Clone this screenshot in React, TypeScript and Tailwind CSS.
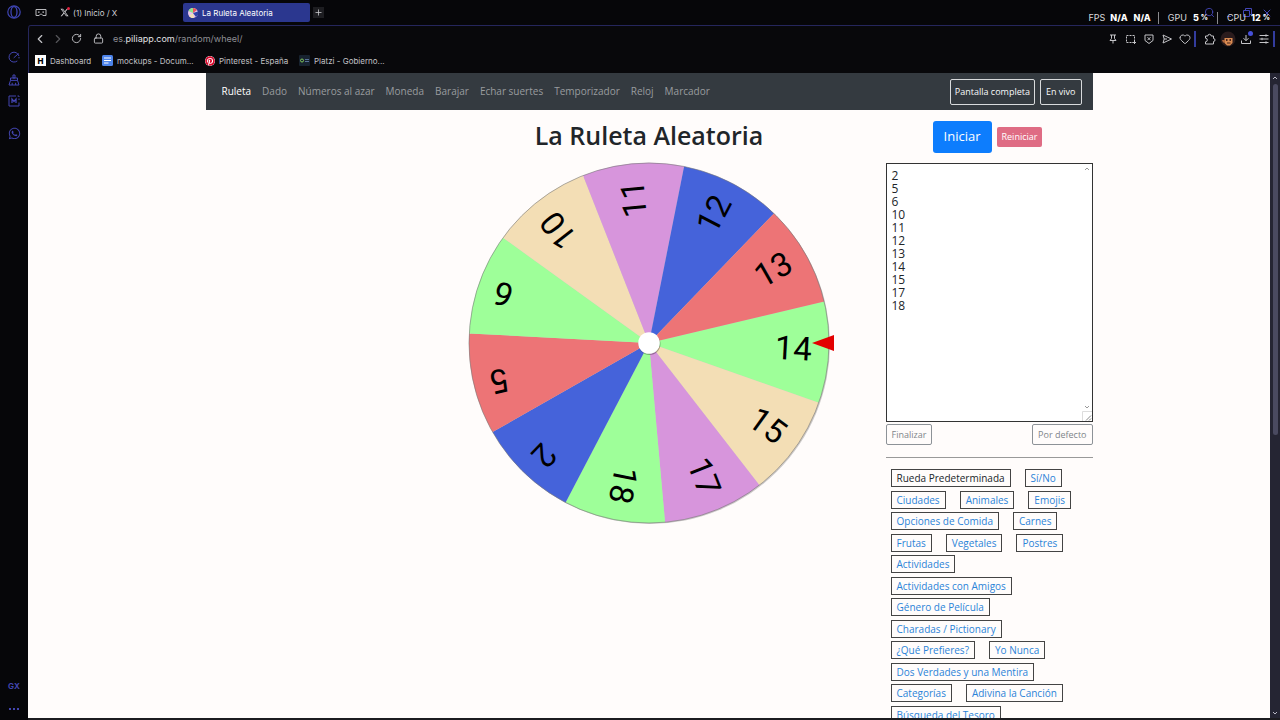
import type { ReactNode } from "react";
import {
  ChevronLeft,
  ChevronRight,
  Heart,
  Lock,
  Minus,
  Plus,
  RotateCw,
  Search,
  X,
} from "lucide-react";
import { FaPinterest, FaWhatsapp, FaXTwitter } from "react-icons/fa6";

const GREEN = "#9eff99";
const TAN = "#f3deb5";
const PURPLE = "#d795dc";
const BLUE = "#4563da";
const RED = "#ed7476";

const slices = [
  { label: "14", color: GREEN },
  { label: "15", color: TAN },
  { label: "17", color: PURPLE },
  { label: "18", color: GREEN },
  { label: "2", color: BLUE },
  { label: "5", color: RED },
  { label: "6", color: GREEN },
  { label: "10", color: TAN },
  { label: "11", color: PURPLE },
  { label: "12", color: BLUE },
  { label: "13", color: RED },
];

const navItems = [
  "Ruleta",
  "Dado",
  "Números al azar",
  "Moneda",
  "Barajar",
  "Echar suertes",
  "Temporizador",
  "Reloj",
  "Marcador",
];

const presets = [
  "Rueda Predeterminada",
  "Sí/No",
  "Ciudades",
  "Animales",
  "Emojis",
  "Opciones de Comida",
  "Carnes",
  "Frutas",
  "Vegetales",
  "Postres",
  "Actividades",
  "Actividades con Amigos",
  "Género de Película",
  "Charadas / Pictionary",
  "¿Qué Prefieres?",
  "Yo Nunca",
  "Dos Verdades y una Mentira",
  "Categorías",
  "Adivina la Canción",
  "Búsqueda del Tesoro",
];

const entries = ["2", "5", "6", "10", "11", "12", "13", "14", "15", "17", "18"];

const RADIUS = 180;
const START_ANGLE = -13.3;

function point(angle: number) {
  const rad = (angle * Math.PI) / 180;
  return `${RADIUS * Math.cos(rad)} ${RADIUS * Math.sin(rad)}`;
}

function Wheel() {
  const step = 360 / slices.length;
  return (
    <svg
      viewBox="-181 -181 362 362"
      className="w-[362px] max-w-full overflow-visible"
      role="img"
      aria-label="Ruleta"
    >
      <circle cx="1" cy="1" r={RADIUS} fill="#000" opacity="0.2" />
      {slices.map((slice, i) => {
        const from = START_ANGLE + i * step;
        return (
          <g key={slice.label}>
            <path
              d={`M0 0 L${point(from)} A${RADIUS} ${RADIUS} 0 0 1 ${point(from + step)} Z`}
              fill={slice.color}
            />
            <text
              x="163"
              y="9"
              textAnchor="end"
              transform={`rotate(${from + step / 2})`}
              className="font-['Roboto','Liberation_Sans',sans-serif] text-[33px]"
            >
              {slice.label}
            </text>
          </g>
        );
      })}
      <circle r={RADIUS} fill="none" stroke="#777" strokeWidth="0.6" />
      <circle cx="0.5" cy="1" r="11" fill="#000" opacity="0.3" />
      <circle r="10.8" fill="#fff" />
      <path d="M163 0 L185 -8 V8 Z" fill="#e30000" />
    </svg>
  );
}

function OperaLogo() {
  return (
    <svg viewBox="0 0 14 14" className="size-[14px]" fill="none" stroke="#3f45b5">
      <circle cx="7" cy="7" r="6.2" strokeWidth="1.2" />
      <ellipse cx="7" cy="7" rx="3" ry="5.4" strokeWidth="1.3" />
    </svg>
  );
}

function SpeedDialIcon() {
  return (
    <svg viewBox="0 0 12 12" className="size-3" fill="none" stroke="currentColor" strokeLinecap="round">
      <path d="M9 10.2A5 5 0 1 1 10.8 4.6M6 6.6L10.3 2.8M11 6.4v.6" />
    </svg>
  );
}

function CleanerIcon() {
  return (
    <svg viewBox="0 0 12 12" className="size-3" fill="none" stroke="currentColor" strokeLinejoin="round">
      <path d="M5 1h2v3H5zM2.5 4h7v2.4h-7zM2.5 6.4L1 11h10L9.5 6.4M4.2 11V8.8M7.6 11V8.8" />
    </svg>
  );
}

function ModsIcon() {
  return (
    <svg viewBox="0 0 12 12" className="size-3" fill="none" stroke="currentColor">
      <path d="M8 1H1v10h10V7.5M11 5V3.5M9.5 1H11v1" />
      <path d="M4 8V4l2 2.4L8 4v4" strokeWidth="1.3" />
    </svg>
  );
}

function Sidebar() {
  return (
    <aside className="flex w-7 shrink-0 flex-col items-center justify-between bg-[#060609] pt-[5px] pb-[6px] text-[#4345b0]">
      <div className="flex flex-col items-center">
        <button aria-label="Menú">
          <OperaLogo />
        </button>
        <button aria-label="Speed dial" className="mt-8">
          <SpeedDialIcon />
        </button>
        <button aria-label="Limpieza" className="mt-[11px]">
          <CleanerIcon />
        </button>
        <button aria-label="Mods" className="mt-[9px]">
          <ModsIcon />
        </button>
        <button aria-label="WhatsApp" className="mt-5">
          <FaWhatsapp size={13} />
        </button>
      </div>
      <div className="flex flex-col items-center gap-3">
        <button className="font-['Inter',sans-serif] text-[8px] leading-3 font-bold">GX</button>
        <button aria-label="Más" className="flex h-[10px] items-center gap-[2px]">
          <span className="size-[2px] bg-current" />
          <span className="size-[2px] bg-current" />
          <span className="size-[2px] bg-current" />
        </button>
      </div>
    </aside>
  );
}

function TabBar() {
  return (
    <div className="flex h-[25px] items-center pl-[7px] text-[8px] text-[#d0d0d4]">
      <button aria-label="Espacio de trabajo">
        <svg viewBox="0 0 12 10" className="h-[10px] w-3" fill="none" stroke="#b8b8bc">
          <path d="M1 1.5h10v6H7.8L6.500 6h-1L4.2 7.5H1z" strokeLinejoin="round" />
          <path d="M3 4.2h1.6M7.4 4.2H9" strokeWidth="1.2" />
        </svg>
      </button>
      <a href="#x" className="ml-[13px] flex w-[123px] items-center gap-1">
        <span className="relative">
          <FaXTwitter size={9} />
          <span className="absolute -top-px -right-px size-[3px] rounded-full bg-[#e0213f]" />
        </span>
        (1) Inicio / X
      </a>
      <a
        href="#ruleta"
        className="flex h-[19px] w-[127px] items-center gap-[4px] rounded-[2px] bg-[#2b378f] pl-[5px] text-white"
      >
        <svg viewBox="0 0 10 10" className="size-[10px]">
          <circle cx="5" cy="5" r="5" fill="#e8c6ec" />
          <path d="M5 5V0a5 5 0 0 0-4.5 3z" fill="#8ee58c" />
          <path d="M5 5L1 8a5 5 0 0 0 5 2z" fill="#f3deb5" />
          <path d="M5 5L9 2A5 5 0 0 0 5 0z" fill="#e8585d" />
          <path d="M5 5l5-1.500v3L8 9z" fill="#2e43a8" />
        </svg>
        La Ruleta Aleatoria
      </a>
      <button aria-label="Nueva pestaña" className="ml-[3px] flex size-[11px] items-center justify-center bg-[#1d1d21]">
        <Plus size={9} />
      </button>
      <div className="ml-auto flex items-center gap-[8px] pr-[7px] text-[#4346b8]">
        <button aria-label="Buscar">
          <Search size={11} strokeWidth={2} />
        </button>
        <button aria-label="Minimizar">
          <svg viewBox="0 0 11 11" className="size-[11px]" stroke="currentColor">
            <path d="M4 9.500h4" />
          </svg>
        </button>
        <button aria-label="Restaurar">
          <svg viewBox="0 0 11 11" className="size-[11px]" fill="none" stroke="currentColor">
            <path d="M1.500 3.500h6v6h-6zM3.500 3.500v-2h6v6h-2" />
          </svg>
        </button>
        <button aria-label="Cerrar">
          <X size={12} strokeWidth={2} />
        </button>
      </div>
    </div>
  );
}

function ToolButton({ label, children }: { label: string; children: ReactNode }) {
  return (
    <button aria-label={label} className="relative flex h-[18px] w-[18px] items-center justify-center">
      {children}
    </button>
  );
}

function AddressBar() {
  return (
    <div className="flex h-[25px] items-center text-[#c4c4c8]">
      <div className="flex items-center pl-[2px]">
        <ToolButton label="Atrás">
          <ChevronLeft size={14} />
        </ToolButton>
        <span className="text-[#55555a]">
          <ToolButton label="Adelante">
            <ChevronRight size={14} />
          </ToolButton>
        </span>
        <ToolButton label="Recargar">
          <RotateCw size={11} />
        </ToolButton>
      </div>
      <span className="ml-[8px] flex">
        <Lock size={11} />
      </span>
      <a href="#url" className="ml-[9px] text-[9px] text-[#8f8f95]">
        es.<span className="text-[#e2e2e5]">piliapp.com</span>/random/wheel/
      </a>
      <div className="ml-auto flex items-center pr-[5px]">
        <ToolButton label="Fijar">
          <svg viewBox="0 0 10 10" className="size-[10px]" fill="none" stroke="currentColor">
            <path d="M2 1h6M3.500 1v3.500L2 6.500h6L6.500 4.500V1M5 6.500V9.500" />
          </svg>
        </ToolButton>
        <ToolButton label="Captura">
          <svg viewBox="0 0 10 10" className="size-[10px]" fill="none" stroke="currentColor">
            <path d="M.5 1.500h8v7h-8z" strokeDasharray="2 1" />
            <path d="M8.500 6.500v3.500M6.500 8.500H10" />
          </svg>
        </ToolButton>
        <ToolButton label="Bloqueador">
          <svg viewBox="0 0 10 10" className="size-[10px]" fill="none" stroke="currentColor">
            <path d="M1 1h8v5.500L5 9.500 1 6.500zM3.500 3.200l3 3M6.500 3.200l-3 3" />
          </svg>
        </ToolButton>
        <ToolButton label="Enviar">
          <svg viewBox="0 0 10 10" className="size-[10px]" fill="none" stroke="currentColor" strokeLinejoin="round">
            <path d="M1 1l8.500 4L1 9l1.200-4zM2.200 5H5" />
          </svg>
        </ToolButton>
        <ToolButton label="Favorito">
          <Heart size={12} />
        </ToolButton>
        <span className="mr-[5px] h-4 w-[2px] bg-[#333c9e]" />
        <ToolButton label="Extensiones">
          <svg viewBox="0 0 12 12" className="size-3" fill="none" stroke="currentColor" strokeLinejoin="round">
            <path d="M1.500 3h2.300a1.700 1.700 0 0 1 3.400 0H9.500v2.500a1.500 1.500 0 0 1 0 3V11h-8V8.800a1.800 1.800 0 0 0 0-3.600z" />
          </svg>
        </ToolButton>
        <ToolButton label="Perfil">
          <svg viewBox="0 0 16 16" className="size-4">
            <circle cx="8" cy="8" r="7.500" fill="#2b1c1d" />
            <path d="M4.500 7h8v5l-2.500 2.500H7L4.500 12z" fill="#d98b52" />
            <path d="M2 9h3v2.500H3z" fill="#b3683b" />
            <path d="M6 8h1.500v2H6zM9.500 8H11v2H9.500zM7 11.500h3.500v1H7z" fill="#4a251b" />
          </svg>
        </ToolButton>
        <ToolButton label="Descargas">
          <svg viewBox="0 0 10 10" className="size-[10px]" fill="none" stroke="currentColor">
            <path d="M5 1v5.500M2.500 4.200L5 6.700l2.500-2.500M.5 6.500v3h9v-3" />
          </svg>
          <span className="absolute top-px right-[2px] size-[5px] rounded-full bg-[#4650d8]" />
        </ToolButton>
        <ToolButton label="Ajustes">
          <svg viewBox="0 0 10 10" className="size-[10px]" fill="none" stroke="currentColor">
            <path d="M.5 1.500h9M.5 5h9M.5 8.500h9" />
            <path d="M7 .3v2.400M3 3.800v2.400M7 7.300v2.400" />
          </svg>
        </ToolButton>
        <span className="h-4 w-[2px] bg-[#333c9e]" />
      </div>
    </div>
  );
}

function Bookmarks() {
  return (
    <nav className="mb-[3px] flex h-[19px] items-center pl-[6px] text-[8px] text-[#c2c2c6]">
      <a href="#dashboard" className="flex w-[67px] items-center gap-1">
        <span className="flex size-[11px] items-center justify-center bg-white text-[8px] font-extrabold text-black">
          H
        </span>
        Dashboard
      </a>
      <a href="#mockups" className="flex w-[103px] items-center gap-1">
        <svg viewBox="0 0 11 11" className="size-[11px]">
          <rect width="11" height="11" rx="1.500" fill="#4c83ea" />
          <path d="M2 3h7M2 5.500h7M2 8h4.500" stroke="#fff" />
        </svg>
        mockups - Docum...
      </a>
      <a href="#pinterest" className="flex w-[94px] items-center gap-1">
        <FaPinterest size={10} className="rounded-full bg-white text-[#d8092d]" />
        Pinterest - España
      </a>
      <a href="#platzi" className="flex items-center gap-1">
        <svg viewBox="0 0 11 11" className="size-[11px]">
          <rect width="11" height="11" rx="1" fill="#17222f" />
          <circle cx="3" cy="5.500" r="1.500" fill="none" stroke="#7fc65a" />
          <path d="M6 4.500h4M6 6.500h4" stroke="#58719a" />
        </svg>
        Platzi - Gobierno...
      </a>
    </nav>
  );
}

function StatsOverlay() {
  return (
    <div className="pointer-events-none absolute top-[11px] right-[10px] flex items-center font-['Inter',sans-serif] text-[9px] leading-[14px] text-[#dadadd]">
      <span>FPS</span>
      <b className="ml-[5px] font-extrabold text-white">N/A</b>
      <b className="ml-[6px] font-extrabold text-white">N/A</b>
      <span className="mr-[9px] ml-[7px] h-3 w-px bg-[#8a8a8e]" />
      <span>GPU</span>
      <b className="ml-[6px] font-extrabold text-white">5</b>
      <b className="ml-[2px] text-[7px] font-extrabold text-white">%</b>
      <span className="mx-[9px] h-3 w-px bg-[#8a8a8e]" />
      <span>CPU</span>
      <b className="ml-[5px] font-extrabold text-white">12</b>
      <b className="ml-[2px] text-[7px] font-extrabold text-white">%</b>
    </div>
  );
}

function SiteNav() {
  return (
    <header className="flex h-[37px] items-center bg-[#343a40] pr-[11px] pl-4">
      <nav className="flex gap-[11px] text-[10px]">
        {navItems.map((item, i) => (
          <a key={item} href={`#${i}`} className={i === 0 ? "text-white" : "text-[#999c9f]"}>
            {item}
          </a>
        ))}
      </nav>
      <div className="ml-auto flex gap-[5px] text-[9px] text-[#f8f9fa]">
        <button className="h-[26px] rounded-[2px] border border-[#d8dadc] px-[4px]">Pantalla completa</button>
        <button className="h-[26px] rounded-[2px] border border-[#d8dadc] px-[5px]">En vivo</button>
      </div>
    </header>
  );
}

function Controls() {
  return (
    <section className="w-[207px] shrink-0 pt-[11px]">
      <div className="flex items-center justify-center gap-[5px] pr-[3px] text-white">
        <button className="h-8 rounded-[3px] bg-[#0d7dfd] px-[11px] text-[13px]">Iniciar</button>
        <button className="h-5 rounded-[2px] bg-[#df6c84] px-[5px] text-[9px]">Reiniciar</button>
      </div>

      <div className="relative mt-[10px]">
        <textarea
          aria-label="Opciones de la ruleta"
          defaultValue={entries.join("\n")}
          spellCheck={false}
          className="block h-[259px] w-full resize-none overflow-hidden border border-[#333] bg-white px-[5px] py-[5px] text-[12px] leading-[13px] text-[#212529]"
        />
        <svg viewBox="0 0 6 4" className="absolute top-[4px] right-[3px] w-[6px]" fill="none" stroke="#999">
          <path d="M1 3l2-2 2 2" />
        </svg>
        <svg viewBox="0 0 6 4" className="absolute right-[3px] bottom-[13px] w-[6px]" fill="none" stroke="#999">
          <path d="M1 1l2 2 2-2" />
        </svg>
        <svg viewBox="0 0 10 10" className="absolute right-px bottom-px size-[10px]" fill="none">
          <path d="M.5 10V.5H10" stroke="#ddd" />
          <path d="M4 9.500l5-5M7 9.500l2-2" stroke="#888" />
        </svg>
      </div>

      <div className="mt-[2px] flex justify-between text-[9px] text-[#80858a]">
        <button className="h-[21px] rounded-[2px] border border-[#8d9297] px-[5px]">Finalizar</button>
        <button className="h-[21px] rounded-[2px] border border-[#8d9297] px-[5px]">Por defecto</button>
      </div>

      <hr className="mt-[12px] border-[#999]" />

      <ul className="mx-[5px] mt-[11px] flex h-[255px] flex-wrap content-between gap-x-[14px]">
        {presets.map((preset, i) => (
          <li key={preset} className="flex">
            <a
              href={`#lista-${i}`}
              className={`h-[18px] border border-[#444] px-[5px] text-[10px] leading-4 whitespace-nowrap ${
                i === 0 ? "text-[#212529]" : "text-[#2b83d8]"
              }`}
            >
              {preset}
            </a>
          </li>
        ))}
      </ul>
    </section>
  );
}

function PageScrollbar() {
  return (
    <div className="flex w-[10px] shrink-0 flex-col items-center bg-[#252533] py-[3px] text-[#b8b8c4]">
      <svg viewBox="0 0 6 4" className="w-[6px]" fill="none" stroke="currentColor">
        <path d="M1 3l2-2 2 2" />
      </svg>
      <div className="mt-[4px] h-[55%] w-[5px] rounded-full bg-[#4a4a60]" />
      <svg viewBox="0 0 6 4" className="mt-auto w-[6px]" fill="none" stroke="currentColor">
        <path d="M1 1l2 2 2-2" />
      </svg>
    </div>
  );
}

export default function App() {
  return (
    <div className="relative flex h-screen overflow-hidden bg-[#060609] font-['Inter',sans-serif]">
      <Sidebar />
      <div className="flex min-w-0 flex-1 flex-col">
        <TabBar />
        <div className="flex min-h-0 flex-1 flex-col rounded-tl-[3px] border-t border-[#25265c]">
          <div className="rounded-tl-[3px] border-l border-[#25265c] bg-[#08080b]">
            <AddressBar />
            <Bookmarks />
          </div>
          <div className="flex min-h-0 flex-1 border-b-2 border-[#1c1c20]">
            <main className="min-w-0 flex-1 overflow-hidden bg-[#fffcfb] font-['Open_Sans','Noto_Sans',sans-serif] text-[#212529]">
              <div className="mx-auto w-full max-w-[887px]">
                <SiteNav />
                <div className="flex justify-between">
                  <div className="w-[207px] shrink" />
                  <section className="flex flex-1 flex-col items-center pt-[10px]">
                    <h1 className="text-[25px] leading-[30px] font-semibold">La Ruleta Aleatoria</h1>
                    <div className="mt-[12px] flex">
                      <Wheel />
                    </div>
                  </section>
                  <Controls />
                </div>
              </div>
            </main>
            <PageScrollbar />
          </div>
        </div>
      </div>
      <StatsOverlay />
    </div>
  );
}
